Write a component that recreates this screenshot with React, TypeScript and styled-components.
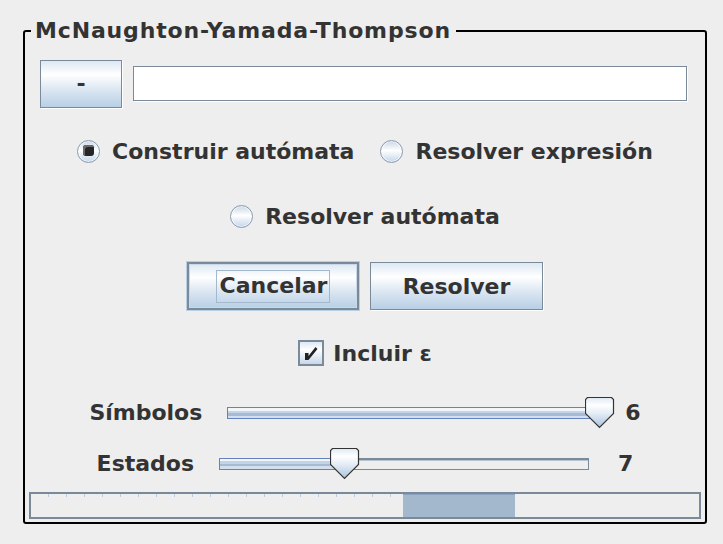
import React from "react";
import styled, { createGlobalStyle } from "styled-components";

const Global = createGlobalStyle`
  html, body { margin: 0; padding: 0; background: #eeeeee; }
  body {
    font-family: "DejaVu Sans", "Liberation Sans", sans-serif;
    color: #333333;
    width: 723px;
    height: 544px;
    overflow: hidden;
  }
`;

const Panel = styled.fieldset`
  box-sizing: border-box;
  width: 684px;
  min-width: 0;
  margin: 18px 0 0 23px;
  padding: 0 0 3px 0;
  border: 2px solid #000000;
  border-radius: 3px;
`;

const Title = styled.legend`
  margin-left: 6px;
  padding: 0 5px 0 4px;
  font-size: 22px;
  font-weight: bold;
  line-height: 26px;
  letter-spacing: 0.85px;
  color: #333333;
`;

const Content = styled.div`
  display: flex;
  flex-direction: column;
`;

const Row = styled.div<{ $top: number; $height: number; $gap?: number }>`
  display: flex;
  align-items: center;
  justify-content: center;
  margin-top: ${(p) => p.$top}px;
  height: ${(p) => p.$height}px;
  gap: ${(p) => p.$gap ?? 0}px;
`;

const InputRow = styled.div`
  display: flex;
  align-items: center;
  margin-top: 15px;
  height: 49px;
  padding: 0 18px 0 15px;
  gap: 11px;
`;

const Button = styled.button<{ $w: number; $focused?: boolean }>`
  box-sizing: border-box;
  width: ${(p) => p.$w}px;
  height: 48px;
  padding: 0;
  display: flex;
  align-items: center;
  justify-content: center;
  font-family: "DejaVu Sans", "Liberation Sans", sans-serif;
  font-size: 22px;
  font-weight: bold;
  color: #333333;
  background: linear-gradient(
    to bottom,
    #dde8f3 0%,
    #ffffff 30%,
    #dde8f3 60%,
    #b8cfe5 100%
  );
  border: ${(p) => (p.$focused ? "2px" : "1px")} solid #7a8a99;
  box-shadow: ${(p) =>
    p.$focused
      ? "0 0 0 1px #b8cfe5, inset 0 0 0 1px #c9d9ea"
      : "1px 1px 0 #ffffff"};
`;

const FocusRing = styled.span`
  border: 1px solid #a3b8cc;
  padding: 1px 2px 2px 3px;
  line-height: 28px;
`;

const TextField = styled.div`
  flex: 1;
  box-sizing: border-box;
  height: 35px;
  background: #ffffff;
  border: 1px solid #7a8a99;
  box-shadow: 1px 1px 0 #ffffff;
`;

const Option = styled.label<{ $after?: number }>`
  display: flex;
  align-items: center;
  gap: 12px;
  margin-right: ${(p) => p.$after ?? 0}px;
  font-size: 22px;
  font-weight: bold;
  color: #333333;
`;

const Radio = styled.span<{ $checked?: boolean }>`
  box-sizing: border-box;
  position: relative;
  width: 23px;
  height: 23px;
  border-radius: 50%;
  border: 1.5px solid #8c9cac;
  background: linear-gradient(to bottom, #c9d7e5 0%, #ffffff 45%, #c3d5e8 100%);
  box-shadow: inset 0 0 0 1px rgba(255, 255, 255, 0.6);
  &::after {
    content: "";
    display: ${(p) => (p.$checked ? "block" : "none")};
    position: absolute;
    left: 4.5px;
    top: 4.5px;
    width: 11px;
    height: 11px;
    border-radius: 3px;
    background: #262626;
    box-shadow: inset 2px 2px 0 #6b6b6b;
  }
`;

const CheckBox = styled.span`
  box-sizing: border-box;
  width: 26px;
  height: 26px;
  border: 2px solid #7a8a99;
  background: linear-gradient(to bottom, #dde8f3 0%, #ffffff 35%, #c6d7ea 100%);
  display: flex;
  align-items: center;
  justify-content: center;
`;

const CheckText = styled.span`
  margin-left: -3px;
`;

const SliderLabel = styled.span<{ $after: number }>`
  font-size: 22px;
  font-weight: bold;
  margin-right: ${(p) => p.$after}px;
`;

const SliderValue = styled.span<{ $before: number }>`
  font-size: 22px;
  font-weight: bold;
  margin-left: ${(p) => p.$before}px;
`;

const SliderBox = styled.div<{ $w: number }>`
  position: relative;
  width: ${(p) => p.$w}px;
  height: 31px;
  display: flex;
  align-items: center;
`;

const Track = styled.div`
  display: flex;
  width: 100%;
  height: 12px;
`;

const TrackFill = styled.div`
  box-sizing: border-box;
  height: 100%;
  border: 1px solid #6382bf;
  border-right: none;
  background: linear-gradient(
    to bottom,
    #f2f6fb 0 25%,
    #c4d4e7 25% 50%,
    #a6bbd3 50% 75%,
    #d3dfec 75% 100%
  );
`;

const TrackRest = styled.div`
  box-sizing: border-box;
  flex: 1;
  height: 100%;
  border: 1px solid #7a8a99;
  border-top-width: 2px;
  background: #eeeeee;
  box-shadow: inset 0 1px 0 #b5c3d0;
`;

const ThumbWrap = styled.div`
  position: absolute;
  top: 0;
  width: 30px;
  height: 32px;
`;

const Progress = styled.div`
  position: relative;
  box-sizing: border-box;
  margin: 13px 4px 0 4px;
  height: 27px;
  border: 2px solid #7a8a99;
  background-color: #eeeeee;
  background-image: repeating-linear-gradient(
    to right,
    transparent 0 17px,
    #b8cfe5 17px 18px
  );
  background-size: 372px 3px;
  background-repeat: no-repeat;
`;

const ProgressBox = styled.div`
  position: absolute;
  top: 0;
  bottom: 0;
  background: #a3b8cc;
  border-top: 1px solid #8aa2c4;
  box-sizing: border-box;
`;

const Thumb: React.FC = () => (
  <svg width="30" height="32" viewBox="0 0 30 32">
    <defs>
      <linearGradient id="thumbGrad" x1="0" y1="0" x2="0" y2="1">
        <stop offset="0" stopColor="#dde8f3" />
        <stop offset="0.25" stopColor="#ffffff" />
        <stop offset="0.55" stopColor="#e2ebf5" />
        <stop offset="1" stopColor="#a9c2dd" />
      </linearGradient>
    </defs>
    <path
      d="M2.5 0.5 H26.5 L28.5 2.5 V16.5 L14.5 30.5 L0.5 16.5 V2.5 Z"
      fill="url(#thumbGrad)"
      stroke="#333333"
      strokeWidth="1.2"
    />
  </svg>
);

const Slider: React.FC<{ width: number; fraction: number }> = ({ width, fraction }) => {
  const thumbW = 29;
  const left = Math.round(fraction * (width - thumbW));
  const fill = Math.min(width, left + 14);
  return (
    <SliderBox $w={width}>
      <Track>
        <TrackFill style={{ width: fill }} />
        {fraction < 1 && <TrackRest />}
      </Track>
      <ThumbWrap style={{ left }}>
        <Thumb />
      </ThumbWrap>
    </SliderBox>
  );
};

export default function App() {
  return (
    <>
      <Global />
      <Panel>
        <Title>McNaughton-Yamada-Thompson</Title>
        <Content>
          <InputRow>
            <Button $w={82}>-</Button>
            <TextField />
          </InputRow>

          <Row $top={28} $height={30}>
            <Option $after={26}>
              <Radio $checked />
              Construir autómata
            </Option>
            <Option>
              <Radio />
              Resolver expresión
            </Option>
          </Row>

          <Row $top={35} $height={30}>
            <Option>
              <Radio />
              Resolver autómata
            </Option>
          </Row>

          <Row $top={30} $height={50} $gap={11}>
            <Button $w={172} $focused>
              <FocusRing>Cancelar</FocusRing>
            </Button>
            <Button $w={173}>Resolver</Button>
          </Row>

          <Row $top={29} $height={26}>
            <Option>
              <CheckBox>
                <svg width="22" height="22" viewBox="0 0 22 22">
                  <path d="M5 11 H8.5 V14 L15.5 5 L17.5 7 L8.5 18 H5 Z" fill="#222222" />
                </svg>
              </CheckBox>
              <CheckText>Incluir ε</CheckText>
            </Option>
          </Row>

          <Row $top={31} $height={31}>
            <SliderLabel $after={25}>Símbolos</SliderLabel>
            <Slider width={387} fraction={1} />
            <SliderValue $before={11}>6</SliderValue>
          </Row>

          <Row $top={20} $height={31}>
            <SliderLabel $after={25}>Estados</SliderLabel>
            <Slider width={370} fraction={0.3255} />
            <SliderValue $before={29}>7</SliderValue>
          </Row>

          <Progress>
            <ProgressBox style={{ left: 372, width: 112 }} />
          </Progress>
        </Content>
      </Panel>
    </>
  );
}
